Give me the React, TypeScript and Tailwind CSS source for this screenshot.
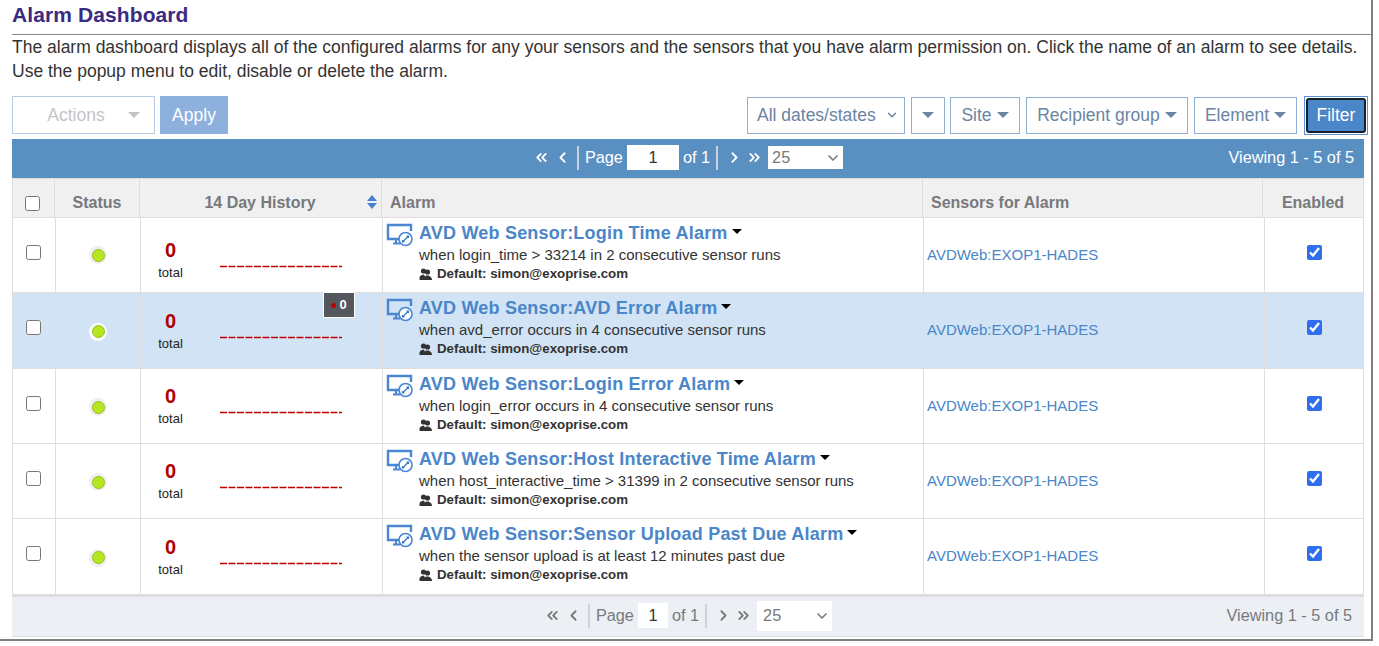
import { ChevronDown, ChevronLeft, ChevronRight, ChevronsLeft, ChevronsRight } from 'lucide-react'

const alarms = [
  { name: 'AVD Web Sensor:Login Time Alarm', rule: 'when login_time > 33214 in 2 consecutive sensor runs', height: 'h-[75px]' },
  { name: 'AVD Web Sensor:AVD Error Alarm', rule: 'when avd_error occurs in 4 consecutive sensor runs', height: 'h-[76px]', selected: true },
  { name: 'AVD Web Sensor:Login Error Alarm', rule: 'when login_error occurs in 4 consecutive sensor runs', height: 'h-[75px]' },
  { name: 'AVD Web Sensor:Host Interactive Time Alarm', rule: 'when host_interactive_time > 31399 in 2 consecutive sensor runs', height: 'h-[75px]' },
  { name: 'AVD Web Sensor:Sensor Upload Past Due Alarm', rule: 'when the sensor upload is at least 12 minutes past due', height: 'h-[76px]' },
]

function Caret({ className }: { className: string }) {
  return <span className={`inline-block w-0 h-0 border-x-[5px] border-x-transparent border-t-[5px] ${className}`} />
}

function FilterButton({ label, className }: { label: string; className: string }) {
  return (
    <div className={`h-[37px] flex items-center justify-center gap-[5px] border border-[#8fb0d0] text-[#6b84a3] ${className}`}>
      {label}
      <Caret className="!border-x-[6px] !border-t-[6px] border-t-[#6b84a3]" />
    </div>
  )
}

function MonitorIcon() {
  return (
    <svg width="28" height="25" viewBox="0 0 28 25" fill="none" className="shrink-0 mt-[1px]">
      <path d="M13 16H2V2H25V8" stroke="#4a86d4" strokeWidth="2.4" />
      <path d="M7 20.5H14M10 16V20" stroke="#4a86d4" strokeWidth="2.2" />
      <circle cx="19.5" cy="16" r="6.5" fill="#fff" stroke="#4a86d4" strokeWidth="1.6" />
      <path d="M16.5 19L22.5 13M20.5 13H22.5V15M16.5 17V19H18.5" stroke="#3a76c4" strokeWidth="1.2" />
    </svg>
  )
}

function UsersIcon() {
  return (
    <svg width="13" height="12" viewBox="0 0 13 12" fill="#333" className="shrink-0">
      <circle cx="4.5" cy="3" r="2.6" />
      <circle cx="8.5" cy="4" r="2.6" />
      <path d="M0.5 10C0.5 7.5 3 7 4.5 6.5L6 8L4 12H0.5Z" />
      <path d="M3.5 12C3.5 9 6 8.5 7.5 7.5H9.5C11 8.5 13 9 13 12Z" />
    </svg>
  )
}

function Sparkline() {
  return (
    <svg width="122" height="3" viewBox="0 0 122 3">
      <line x1="0" y1="1.5" x2="122" y2="1.5" stroke="#c00000" strokeWidth="1.5" strokeDasharray="7 1.5" />
    </svg>
  )
}

function Pager({ tone, inputWidth, selectClass }: { tone: string; inputWidth: string; selectClass: string }) {
  return (
    <div className={`flex items-center ${tone}`}>
      <ChevronsLeft size={17} strokeWidth={2.5} />
      <ChevronLeft size={17} strokeWidth={2.5} className="ml-[4px]" />
      <div className="w-[2px] h-[24px] bg-[#c9d3dc] ml-[6px] mr-[6px]" />
      <span>Page</span>
      <div className={`${inputWidth} h-[25px] mx-[4px] bg-white flex items-center justify-center text-[#333]`}>1</div>
      <span>of 1</span>
      <div className="w-[2px] h-[24px] bg-[#c9d3dc] ml-[6px] mr-[5px]" />
      <ChevronRight size={17} strokeWidth={2.5} className="ml-[3px]" />
      <ChevronsRight size={17} strokeWidth={2.5} className="ml-[3px]" />
      <div className={`w-[75px] ml-[5px] bg-white flex items-center justify-between text-[#77797c] ${selectClass}`}>
        25
        <ChevronDown size={16} strokeWidth={2.5} />
      </div>
    </div>
  )
}

function AlarmRow({ alarm, index }: { alarm: (typeof alarms)[number]; index: number }) {
  const cell = 'border-r border-[#dedede] flex items-center justify-center'
  return (
    <div
      className={`relative grid grid-cols-[43px_85px_242px_541px_341px_1fr] border-b border-[#dedede] ${alarm.height} ${
        alarm.selected ? 'bg-[#d1e3f4]' : 'bg-white'
      }`}
    >
      <div className={`${cell} pr-[2px]`}>
        <input type="checkbox" className="w-[15px] h-[15px] -mt-[6px]" />
      </div>
      <div className={`${cell} ${index === 0 ? '' : 'pt-[2px]'}`}>
        <div className={`w-[18px] h-[18px] rounded-full flex items-center justify-center ${alarm.selected ? 'bg-white' : 'bg-[#eeeeee]'}`}>
          <div className="w-[13px] h-[13px] rounded-full bg-[#b6e61f] border border-[#93bf1a]" />
        </div>
      </div>
      <div className={`${cell} !justify-start ${index === 0 ? 'pt-[9px]' : ''}`}>
        <div className="w-[59px] flex flex-col items-center">
          <span className="mt-[1px] text-[20px] leading-[24px] font-bold text-[#b00000]">0</span>
          <span className="mt-[1px] text-[13px] leading-[20px] text-[#222]">total</span>
        </div>
        <div className="ml-[20px] mt-[13px]">
          <Sparkline />
        </div>
      </div>
      <div className="border-r border-[#dedede] pl-[3px] pt-[4px] flex gap-[5px]">
        <MonitorIcon />
        <div className="min-w-0">
          <div className="flex items-center gap-[4px] text-[18px] leading-[22px] font-bold text-[#4a86c8] tracking-[0.2px]">
            {alarm.name}
            <Caret className="border-t-black -mt-[3px]" />
          </div>
          <div className="text-[15px] leading-[20px] text-[#333] mt-[1px]">{alarm.rule}</div>
          <div className="flex items-center gap-[5px] text-[13.3px] leading-[18px] font-bold text-[#333]">
            <UsersIcon />
            Default: simon@exoprise.com
          </div>
        </div>
      </div>
      <div className="border-r border-[#dedede] pl-[3px] flex items-center text-[15px] text-[#4a86c8]">AVDWeb:EXOP1-HADES</div>
      <div className="flex items-center justify-center">
        <input type="checkbox" defaultChecked readOnly className="w-[15px] h-[15px] -mt-[6px] accent-[#2f6fed]" />
      </div>
      {index === 1 && (
        <div className="absolute left-[310px] top-[-1px] w-[32px] h-[26px] bg-[#54585d] border border-white flex items-center justify-center gap-[3px] text-[13px] font-bold text-white">
          <span className="w-[5px] h-[5px] rounded-full bg-[#c00000]" />0
        </div>
      )}
    </div>
  )
}

export default function App() {
  const head = 'border-r border-[#dedede] flex items-center pt-[10px] text-[16px] font-bold text-[#77797c]'
  return (
    <div className="w-[1373px] h-[641px] bg-white border-r-2 border-b-2 border-[#808080] font-['Liberation_Sans',Arial,sans-serif]">
      <div className="pl-[12px]">
        <h1 className="h-[35px] pt-[3px] text-[21px] leading-[24px] font-bold text-[#3a2a80] border-b border-[#888] tracking-[0.1px]">
          Alarm Dashboard
        </h1>
        <p className="text-[17.5px] leading-[24px] text-[#333]">
          The alarm dashboard displays all of the configured alarms for any your sensors and the sensors that you have alarm permission on. Click the name of an alarm to see details. Use the popup menu to edit, disable or delete the alarm.
        </p>
      </div>

      <div className="flex justify-between items-center pl-[12px] pr-[3px] mt-[13px] h-[38px] text-[17.5px]">
        <div className="flex gap-[5px]">
          <div className="w-[143px] h-[38px] border border-[#b5cde4] flex items-center justify-center gap-[23px] pl-[20px] text-[#c4c4c4]">
            Actions
            <Caret className="!border-x-[6px] !border-t-[6px] border-t-[#c4c4c4]" />
          </div>
          <div className="w-[68px] h-[38px] bg-[#8db0dc] flex items-center justify-center text-white">Apply</div>
        </div>
        <div className="flex items-center gap-[5px]">
          <div className="w-[158px] h-[37px] border border-[#8fb0d0] flex items-center justify-between pl-[9px] pr-[5px] text-[#6b84a3]">
            All dates/states
            <ChevronDown size={14} strokeWidth={2.5} />
          </div>
          <FilterButton label="" className="w-[34px] ml-[1px]" />
          <FilterButton label="Site" className="w-[70px]" />
          <FilterButton label="Recipient group" className="w-[162px] ml-[1px]" />
          <FilterButton label="Element" className="w-[103px] ml-[1px]" />
          <div className="ml-[2px] w-[64px] h-[39px] border border-[#5a8fd0] p-px">
            <div className="w-full h-full rounded-[3px] border-2 border-[#14202e] bg-[#4a86c8] flex items-center justify-center text-white">Filter</div>
          </div>
        </div>
      </div>

      <div className="mt-[5px] ml-[12px] w-[1352px]">
        <div className="h-[39px] pb-[2px] bg-[#5a8fc2] grid grid-cols-[1fr_auto_1fr] items-center text-[16.3px] text-white">
          <div />
          <Pager tone="text-white" inputWidth="w-[52px]" selectClass="h-[23px] pl-[4px] pr-[2px]" />
          <div className="text-right pr-[10px]">Viewing 1 - 5 of 5</div>
        </div>
        <div className="border-x border-[#dedede]">
          <div className="h-[40px] bg-[#f0f0f0] border-y border-[#dedede] grid grid-cols-[42px_85px_242px_541px_340px_1fr]">
            <div className={`${head} justify-center pr-[2px]`}>
              <input type="checkbox" className="w-[15px] h-[15px]" />
            </div>
            <div className={`${head} justify-center`}>Status</div>
            <div className={`${head} relative justify-center pr-[1px]`}>
              14 Day History
              <svg width="10" height="14" viewBox="0 0 10 14" fill="#4a7fd0" className="absolute right-[4px] top-[16px]">
                <path d="M5 0L10 6H0ZM0 8H10L5 14Z" />
              </svg>
            </div>
            <div className={`${head} pl-[8px]`}>Alarm</div>
            <div className={`${head} pl-[8px]`}>Sensors for Alarm</div>
            <div className={`${head} justify-center border-r-0`}>Enabled</div>
          </div>
          {alarms.map((alarm, index) => (
            <AlarmRow key={alarm.name} alarm={alarm} index={index} />
          ))}
        </div>
        <div className="h-[42px] pb-[2px] bg-[#ecf0f5] border-t-2 border-b border-[#dedede] grid grid-cols-[1fr_auto_1fr] items-center text-[16.3px] text-[#77797c]">
          <div />
          <Pager tone="text-[#77797c]" inputWidth="w-[30px]" selectClass="h-[30px] pl-[6px] pr-[2px]" />
          <div className="text-right pr-[12px]">Viewing 1 - 5 of 5</div>
        </div>
      </div>
    </div>
  )
}
